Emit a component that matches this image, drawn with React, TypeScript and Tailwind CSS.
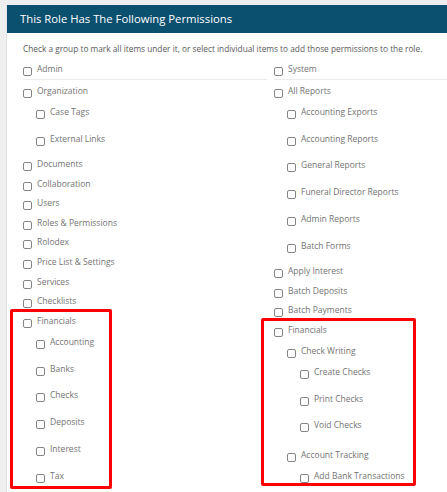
import React from "react";

type Item = { label: string; children?: Item[] };

const left: Item[] = [
  { label: "Organization", children: [{ label: "Case Tags" }, { label: "External Links" }] },
  { label: "Documents" },
  { label: "Collaboration" },
  { label: "Users" },
  { label: "Roles & Permissions" },
  { label: "Rolodex" },
  { label: "Price List & Settings" },
  { label: "Services" },
  { label: "Checklists" },
  {
    label: "Financials",
    children: [
      { label: "Accounting" },
      { label: "Banks" },
      { label: "Checks" },
      { label: "Deposits" },
      { label: "Interest" },
      { label: "Tax" },
    ],
  },
];

const right: Item[] = [
  {
    label: "All Reports",
    children: [
      { label: "Accounting Exports" },
      { label: "Accounting Reports" },
      { label: "General Reports" },
      { label: "Funeral Director Reports" },
      { label: "Admin Reports" },
      { label: "Batch Forms" },
    ],
  },
  { label: "Apply Interest" },
  { label: "Batch Deposits" },
  { label: "Batch Payments" },
  {
    label: "Financials",
    children: [
      {
        label: "Check Writing",
        children: [{ label: "Create Checks" }, { label: "Print Checks" }, { label: "Void Checks" }],
      },
      { label: "Account Tracking", children: [{ label: "Add Bank Transactions" }] },
    ],
  },
];

function Line({ label }: { label: string }) {
  return (
    <div className="flex items-start h-[12px]">
      <span className="mt-[4px] w-[9px] h-[9px] shrink-0 rounded-[2px] border border-[#858585] bg-white" />
      <span className="ml-[5px] leading-[12px] text-[8.5px] text-[#747474] whitespace-nowrap">{label}</span>
    </div>
  );
}

function TopRow({ item }: { item: Item }) {
  return (
    <div>
      <div className="pt-[3.8px] pb-[3.8px]">
        <Line label={item.label} />
      </div>
      {item.children && (
        <div className="pl-[13px]">
          {item.children.map((c) => (
            <ChildRow key={c.label} item={c} />
          ))}
        </div>
      )}
    </div>
  );
}

function ChildRow({ item }: { item: Item }) {
  if (item.children) {
    return (
      <div className="pb-[2.5px]">
        <div className="pt-[5.2px] pb-[3.8px]">
          <Line label={item.label} />
        </div>
        <div className="pl-[13px]">
          {item.children.map((c) => (
            <ChildRow key={c.label} item={c} />
          ))}
        </div>
      </div>
    );
  }
  return (
    <div className="pt-[5.2px] pb-[9.6px]">
      <Line label={item.label} />
    </div>
  );
}

export default function App() {
  return (
    <div
      className="relative w-[447px] h-[492px] overflow-hidden bg-[#efefef]"
      style={{ fontFamily: "'Open Sans', 'Liberation Sans', sans-serif" }}
    >
      <div className="ml-[6px] mt-[5px] w-[460px] h-[520px] bg-white border-l border-[#e2e2e2]">
        <div className="h-[28px] bg-[#0c5070] flex items-center pl-[13px] text-white text-[11.3px]">
          This Role Has The Following Permissions
        </div>
        <div className="pl-[16px]">
          <p className="mt-[10px] leading-[12px] text-[8.3px] text-[#5a5a5a] whitespace-nowrap">
            Check a group to mark all items under it, or select individual items to add those permissions to the role.
          </p>
          <div className="flex mt-[4.5px]">
            <div className="w-[251px]">
              <div className="mr-[7px] border-b border-[#ececec]">
                <TopRow item={{ label: "Admin" }} />
              </div>
              <div className="pt-[1px]">
                {left.map((i) => (
                  <TopRow key={i.label} item={i} />
                ))}
              </div>
            </div>
            <div className="flex-1">
              <div className="border-b border-[#ececec]">
                <TopRow item={{ label: "System" }} />
              </div>
              <div className="pt-[1px]">
                {right.map((i) => (
                  <TopRow key={i.label} item={i} />
                ))}
              </div>
            </div>
          </div>
        </div>
      </div>
      <div className="absolute left-[10px] top-[309px] w-[102px] h-[180px] border-[3px] border-[#ff0000] rounded-[2px]" />
      <div className="absolute left-[261px] top-[318px] w-[155px] h-[168px] border-[3px] border-[#ff0000] rounded-[2px]" />
    </div>
  );
}
